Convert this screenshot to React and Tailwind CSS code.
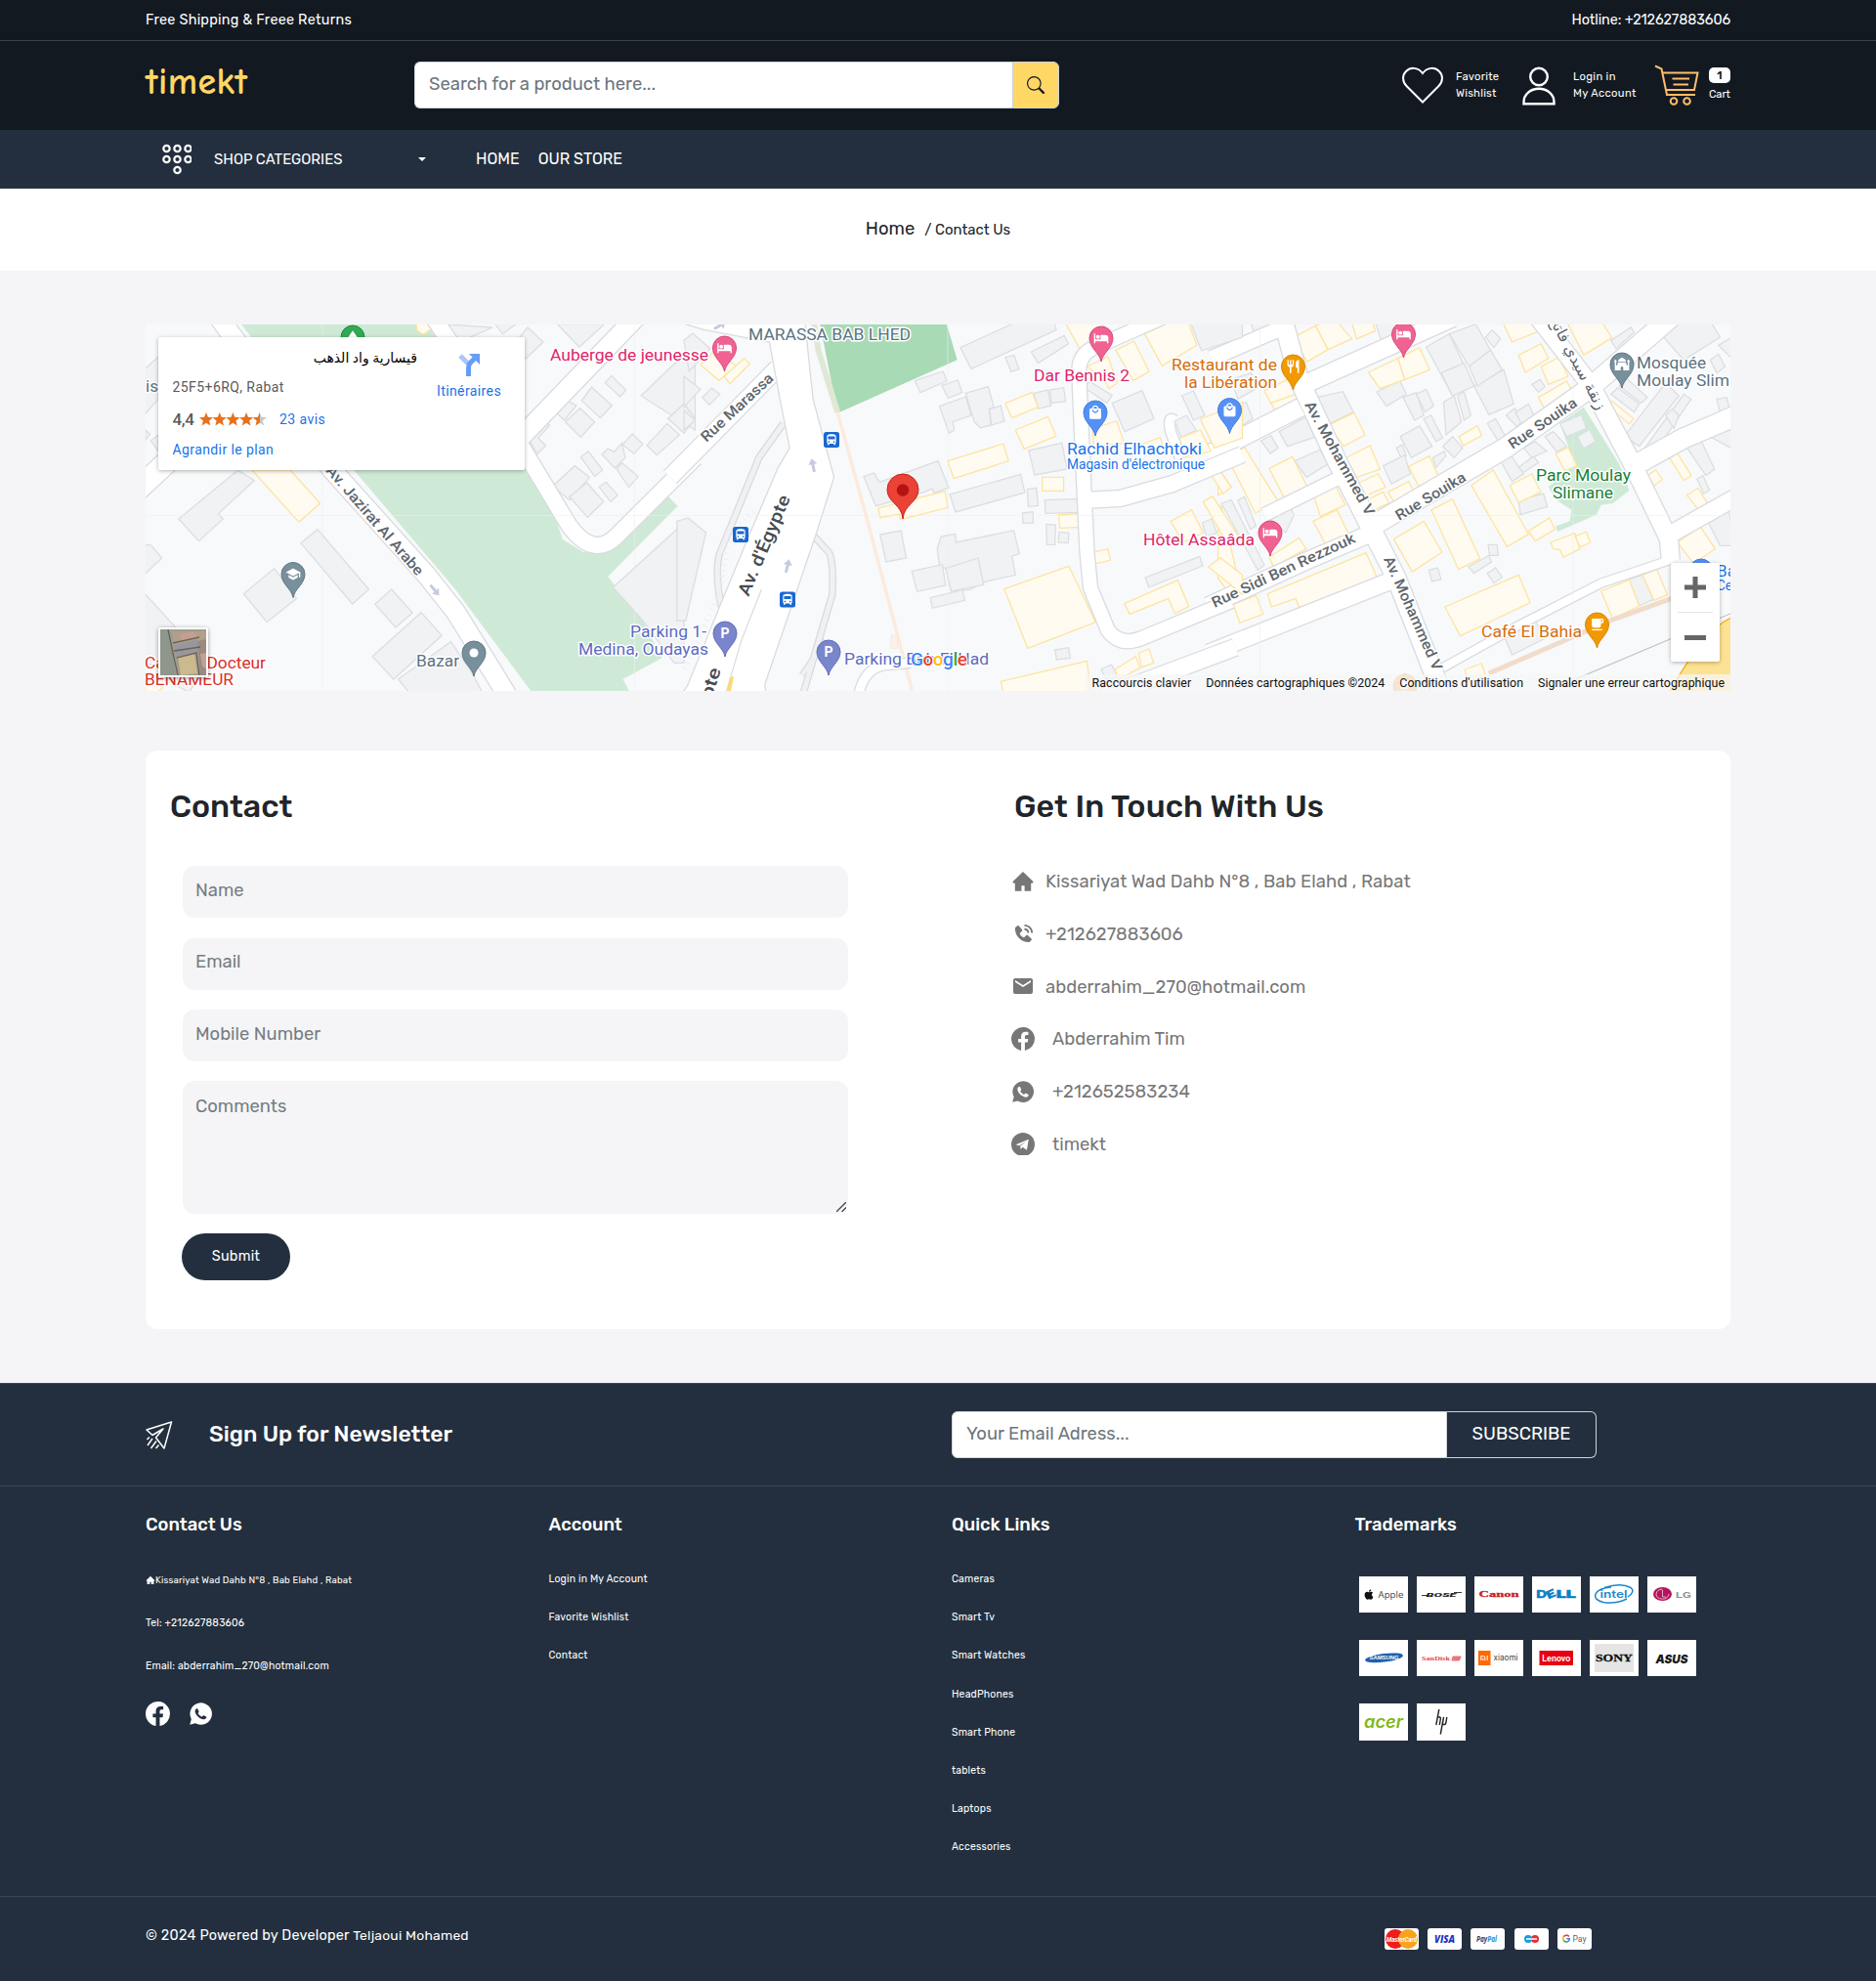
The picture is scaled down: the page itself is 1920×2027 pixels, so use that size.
import React from "react";
import { BsSearch } from "react-icons/bs";
import { BiSolidPhoneCall } from "react-icons/bi";
import {
  MdEmail,
  MdHotel,
  MdLocalMall,
  MdSchool,
  MdRestaurant,
  MdLocalCafe,
  MdDirectionsBus,
  MdMosque,
  MdPark,
} from "react-icons/md";
import { FaApple } from "react-icons/fa";

/* ------------------------------------------------------------------ */
/* Map drawing                                                         */
/* ------------------------------------------------------------------ */

const westGray =
  "120,618 290,468 337,500 233,602 247,618 178,686|470,692 518,650 665,834 618,879|306,848 394,770 458,862 373,935|683,880 730,834 790,906 742,951|675,1040 815,905 874,976 736,1110|749,1110 900,995 960,1090 990,1150 780,1150|0,698 40,698 72,738 25,785|0,820 140,985 70,1070 0,1060|60,1100 130,1030 180,1100 150,1150|0,180 62,120 62,250 20,300|25,345 38,358 25,375|40,378 62,360 62,410|1190,280 1222,248 1260,270 1225,315|1228,320 1270,278 1312,320 1272,367|1275,255 1303,213 1362,270 1328,308|1342,200 1360,178 1402,222 1385,243|1445,240 1600,80 1600,345|1522,310 1568,265 1600,310 1568,355|1462,392 1520,325 1555,360 1490,422|1115,360 1160,308 1183,330 1150,370 1172,392 1148,418|1392,390 1420,357 1450,388 1425,418|1333,420 1350,402 1368,412 1390,385 1400,430 1370,462|1272,428 1294,410 1335,468 1312,487|1375,465 1390,445 1437,488 1410,520|1192,517 1255,455 1298,490 1240,560|1240,550 1290,507 1338,565 1292,613|1325,520 1345,505 1378,545 1358,565|1365,828 1568,630 1568,1060 1540,1060 1450,930|870,20 1020,30 940,68 900,68|1020,10 1100,10 1048,50|1060,110 1120,30 1165,75 1115,125|1205,20 1340,20 1268,90";
const westYellow = "330,468 440,468 525,570 465,628|800,10 838,20 843,35 820,52 803,38|25,1110 75,1135 60,1150 25,1150";

const midGray =
  "792,92 960,10 1060,10 1067,38 823,157|995,105 1090,55 1102,80 1015,140|921,122 946,115 960,158 938,166|662,193 743,165 753,195 677,230|739,208 785,192 797,230 757,247|732,272 808,243 823,300 770,320 775,345 760,355|807,232 872,212 888,275 875,280 880,330 850,338 832,320|875,282 908,270 918,318 882,330|515,488 545,477 560,505 728,440 759,522 716,538 712,525 690,535 550,578|562,666 622,654 637,738 579,750|737,672 777,664 780,690 945,653 961,725 940,732 950,790 860,812 820,835 766,840 750,770 732,760 726,710|653,778 740,758 750,822 668,841|750,770 843,738 859,820 766,840|706,860 798,836 805,868 712,892|762,543 965,481 977,537 778,597|984,527 1010,523 1015,577 987,580|970,600 1000,596 1001,630 972,631|1034,560 1127,556 1129,598 1036,601|1038,634 1065,636 1063,697 1040,697|1075,658 1103,661 1101,692 1073,690|1003,232 1043,222 1052,270 1015,280|1048,222 1088,215 1094,258 1053,262|988,408 1083,385 1098,465 1005,483|1145,213 1163,196 1227,238 1212,262|1227,263 1313,224 1347,310 1263,350|1427,240 1460,225 1493,300 1460,315|1407,318 1440,300 1468,345 1425,368|1063,1020 1102,1013 1107,1045 1068,1050|1322,798 1478,733 1487,762 1332,828|1450,10 1600,10 1600,60 1483,102|1485,630 1512,618 1527,660 1497,672|1195,1080 1225,1065 1245,1105 1210,1110|0,70 25,48 75,95 15,165|53,245 80,216 103,235 73,268|0,180 47,220 0,275|0,285 32,315 0,345|-20,625 12,615 63,660 5,930 -20,930";
const midYellow =
  "557,585 575,580 748,533 756,583 620,620 617,603 562,614|756,440 915,387 930,440 773,494|950,345 1043,304 1066,364 975,403|921,263 998,229 1015,275 940,308|1027,490 1088,490 1088,532 1027,532|1074,606 1135,601 1139,643 1077,646|1161,723 1215,710 1222,745 1166,759|918,833 1103,763 1180,935 985,1015|908,1117 1155,1054 1165,1150 915,1150|1262,878 1415,806 1447,887 1407,908 1388,862 1277,910|1090,10 1190,0 1220,60 1140,107|1155,150 1215,120 1242,200 1218,218 1205,190|1237,100 1290,72 1333,165 1288,193|1320,50 1380,20 1440,0 1470,85 1370,148|1170,340 1240,318 1262,385 1175,395|1480,312 1600,260 1600,370 1520,400|1420,370 1480,345 1510,410 1430,430|1310,390 1365,368 1372,395 1320,405|1500,465 1520,445 1568,520 1545,540|1488,566 1515,548 1600,690 1555,690|1395,625 1455,590 1488,660 1430,690|1503,765 1537,737 1600,790 1600,850|1235,1080 1295,1040 1307,1075 1245,1110|1303,1030 1333,1017 1346,1060 1312,1073|48,145 90,100 150,150 100,193|115,180 173,125 188,142 132,203";

const eastGray =
  "620,90 690,50 765,210 700,240|690,50 770,20 815,100 750,150|665,170 735,140 765,210 700,240|765,210 855,160 885,265 810,298|750,150 815,100 850,160 775,210|470,228 540,193 560,235 500,272|550,245 590,230 613,300 585,315|590,235 620,220 643,270 617,290|673,260 705,240 727,320 680,360|715,240 735,228 755,300 735,315|542,365 600,332 638,395 575,430|530,400 548,390 560,425 545,432|612,310 635,300 670,370 650,380|288,245 368,227 400,290 330,325|175,350 255,305 290,365 200,395|120,378 150,362 172,400 148,417|222,440 300,405 322,450 258,490|490,455 555,422 572,480 515,510|670,395 700,365 730,400 705,430|640,430 675,410 680,425 650,460|805,325 830,310 860,365 840,382|862,300 888,278 915,315 895,335|890,290 930,265 950,310 910,330|800,60 820,38 845,65 825,92|940,205 965,190 980,212 960,228|1180,70 1240,30 1250,45 1195,95|1330,50 1400,10 1480,10 1510,60 1400,130|1220,365 1345,200 1385,240 1265,395|1275,410 1400,235 1422,250 1300,432|1180,235 1200,215 1265,265 1250,290|1205,210 1225,185 1290,245 1270,262|1345,300 1365,280 1385,300 1370,340|1410,400 1450,373 1493,465 1467,485|1440,495 1458,485 1478,530 1460,540|1470,360 1515,330 1560,360 1560,410|1475,630 1535,590 1560,700 1510,700|1505,85 1560,50 1560,140|1480,130 1505,112 1525,150 1500,170|1500,250 1530,245 1541,290 1510,290|845,440 875,420 915,480 880,503|900,460 945,425 960,445 915,475|915,400 950,380 985,410 940,430|980,365 1005,350 1045,395 1015,412|900,560 975,540 987,580 905,605|628,775 655,768 665,803 638,810|748,765 810,730 818,750 765,785|808,697 835,697 838,730 812,730|805,785 830,768 850,797 825,815|1230,805 1275,790 1308,865 1265,885|855,975 950,930 980,985 880,1035|0,570 30,560 130,760 110,775|50,560 70,550 105,640 88,650|150,620 210,585 220,605 195,660|-10,60 50,60 60,85 -10,115|85,10 150,10 150,30 100,45|40,270 75,260 95,310 65,330|468,20 530,10 545,70 490,90|30,190 90,170 110,215 50,250";
const eastYellow =
  "215,62 285,25 323,98 260,135|285,25 340,0 395,65 323,98|393,10 455,10 467,40 410,65|445,168 535,125 555,190 480,218|535,125 600,92 630,160 555,190|150,260 230,218 245,258 168,298|130,225 210,185 240,230 150,262|325,330 402,292 435,360 370,395|17,428 70,398 172,565 103,600|-10,460 30,520 -10,545|145,463 215,427 260,520 190,553|375,432 450,393 480,465 410,490|277,540 340,505 375,575 300,610|278,625 350,590 388,670 318,700|410,510 475,480 497,520 430,550|505,535 567,503 590,550 530,580|567,457 630,425 658,490 597,518|440,560 490,535 507,570 450,595|140,848 438,722 472,800 240,902 225,862 152,888|145,735 235,676 257,710 158,765|36,880 105,853 127,910 56,937|-10,575 0,580 55,820 20,840 -10,800|522,680 613,625 668,720 578,780|636,590 700,557 783,740 718,773|757,515 823,468 930,665 865,703|873,515 940,480 967,535 900,568|720,365 775,332 788,362 732,393|900,115 968,80 990,125 920,168|968,150 1022,122 1050,180 990,205|960,245 1045,195 1068,235 980,282|850,10 970,10 978,35 880,75|1045,10 1150,10 1182,62 1097,115|1168,270 1183,257 1248,310 1235,326|930,655 993,615 1010,650 950,686|997,690 1070,662 1085,710 1035,735 1025,712 1005,710|1072,670 1105,658 1117,690 1085,705|1357,430 1380,415 1423,485 1400,500|1290,485 1315,468 1335,497 1310,515|1410,545 1443,523 1475,575 1448,595|1530,570 1560,560 1560,600|1380,690 1450,642 1495,710 1430,755|677,888 900,790 935,875 723,977|1150,840 1235,805 1265,885 1185,925|1275,790 1318,773 1350,850 1310,868|738,1080 788,1062 800,1100 745,1120";

function Shapes({ data, fill, stroke }) {
  return data
    .split("|")
    .map((p, i) => (
      <polygon key={i} points={p} fill={fill} stroke={stroke} strokeWidth="1.3" vectorEffect="non-scaling-stroke" />
    ));
}

function Roads({ roads, fill = "#ffffff" }) {
  return (
    <>
      {roads.map(([d, w], i) => (
        <path key={"c" + i} d={d} fill="none" stroke="#d9dbe0" strokeWidth={w + 2.6} strokeLinejoin="round" vectorEffect="non-scaling-stroke" />
      ))}
      {roads.map(([d, w], i) => (
        <path key={"f" + i} d={d} fill="none" stroke={fill} strokeWidth={w} strokeLinejoin="round" vectorEffect="non-scaling-stroke" />
      ))}
    </>
  );
}

function Label({ x, y, w, size = 17, fill, rotate = 0, weight = 400, children }) {
  return (
    <text
      transform={`translate(${x} ${y}) rotate(${rotate})`}
      textLength={w}
      lengthAdjust="spacingAndGlyphs"
      fontSize={size}
      fontWeight={weight}
      fill={fill}
      stroke="#ffffff"
      strokeWidth="3"
      strokeLinejoin="round"
      paintOrder="stroke"
    >
      {children}
    </text>
  );
}

function Pin({ x, y, fill, edge, icon: Icon, letter }) {
  return (
    <g transform={`translate(${x} ${y})`}>
      <path d="M0 0C-1.5-9-12-14-12-24A12 12 0 1 1 12-24C12-14 1.5-9 0 0Z" fill={fill} stroke={edge} strokeWidth="1" />
      {Icon && <Icon x={-8} y={-32} width={16} height={16} size={16} color="#fff" />}
      {letter && (
        <text x="0" y="-19" textAnchor="middle" fontSize="14" fontWeight="700" fill="#fff">
          {letter}
        </text>
      )}
      {!Icon && !letter && <circle cx="0" cy="-24" r="4.5" fill="#fff" />}
    </g>
  );
}

function Arrow({ x, y, r }) {
  return <path d="M-1.5 7V-1H-4.5L0-7L4.5-1H1.5V7Z" fill="#c5cae0" transform={`translate(${x} ${y}) rotate(${r})`} />;
}

const PINK = "#e0246b";
const SLATE = "#5a7382";
const STREET = "#60666d";

function MapDrawing() {
  const gray = { fill: "#f1f2f4", stroke: "#dcdee2" };
  const yellow = { fill: "#fffbf0", stroke: "#fde49f" };
  return (
    <svg viewBox="0 0 1622 375" className="block h-full w-full font-['Roboto',sans-serif]">
      <rect width="1622" height="375" fill="#f8f9fb" />
      {/* west */}
      <g transform="translate(-9 -7) scale(.35714 .33333)">
        <polygon
          points="292,10 830,10 1112,380 1150,450 1220,680 1280,720 1345,715 1515,540 1550,578 1350,795 1450,930 1505,1045 1393,1110 1413,1150 1132,1150 910,830 622,468"
          fill="#ceead6"
        />
        <Shapes data={westGray} {...gray} />
        <Shapes data={westYellow} {...yellow} />
        <Roads
          roads={[
            ["M235 0L560 468L830 790L915 905L1062 1160", 19],
            ["M0 530L150 380", 22],
            ["M850 0L1105 400L1240 640Q1310 740 1375 670L1600 430", 16],
            ["M1080 390L1430 0", 19],
          ]}
        />
      </g>
      {/* east */}
      <g transform="translate(1101 -7) scale(.33806 .33333)">
        <polygon
          points="1097,275 1025,325 1070,450 1040,480 990,520 1015,560 1060,590 1055,625 1012,640 1018,657 1135,605 1150,575 1185,570 1235,530 1205,450"
          fill="#ceead6"
        />
        <path d="M1550 918Q1500 940 1475 980L1410 1060L1385 1100L1350 1160H1560Z" fill="#fde293" stroke="#f9ab00" strokeWidth="1.2" vectorEffect="non-scaling-stroke" />
        <Shapes data={eastGray} {...gray} />
        <Shapes data={eastYellow} {...yellow} />
        <Shapes data="1025,325 1090,298 1105,340 1045,365|1077,365 1115,343 1133,380 1097,402" {...gray} />
        <Shapes data="1012,418 1050,398 1077,455 1040,470" {...yellow} />
        <path d="M810 1092L1190 925L1370 860" fill="none" stroke="#f1dccb" strokeWidth="5" vectorEffect="non-scaling-stroke" />
        <path d="M1060 1115L1550 905" fill="none" stroke="#c4c6ca" strokeWidth="1.2" vectorEffect="non-scaling-stroke" />
        <Roads
          roads={[
            ["M-30 125L210 20", 15],
            ["M-40 420L240 275", 18],
            ["M230 215L700 0", 18],
            ["M185 0L235 190L345 430L450 640L530 800L670 1160", 19],
            ["M430 655L860 400L1110 220L1360 0", 20],
            ["M-40 885L250 750L470 655", 17],
            ["M130 605L360 490", 13],
            ["M-40 1030L520 805", 17],
            ["M960 0L1120 210L1240 440L1355 680L1360 745", 18],
            ["M1240 460L1400 370L1560 300", 20],
            ["M1350 670L1560 550", 17],
            ["M670 1075L900 945L1150 815L1370 740", 8],
          ]}
        />
      </g>
      {/* centre */}
      <g transform="translate(551 -7) scale(.35714 .33333)">
        <polygon points="388,10 750,10 783,130 440,293" fill="#a8dab5" />
        <path d="M372 10L385 100L440 290" fill="none" stroke="#dfe8d5" strokeWidth="6" vectorEffect="non-scaling-stroke" />
        <path d="M440 290L520 600L655 1150" fill="none" stroke="#fcebdd" strokeWidth="3.5" vectorEffect="non-scaling-stroke" />
        <rect x="594" y="975" width="18" height="40" fill="#fdf2e8" stroke="#fbe6d4" vectorEffect="non-scaling-stroke" />
        <Shapes data={midGray} {...gray} />
        <Shapes data={midYellow} {...yellow} />
        <Roads
          fill="#f0f1f3"
          roads={[
            ["M285 325L215 430L100 730Q88 800 110 900", 5],
            ["M372 670L415 720Q430 750 425 850L340 1160", 5],
            ["M407 990L338 1098", 4],
          ]}
        />
        <path d="M200 595L130 660L100 850L0 1080" fill="none" stroke="#eceef1" strokeWidth="6" strokeDasharray="1 5" vectorEffect="non-scaling-stroke" />
        <Roads
          roads={[
            ["M-40 490L268 155", 17],
            ["M1370 0L1180 90Q1130 110 1132 170L1148 560L1155 720L1165 830L1215 960Q1250 1010 1310 985L1568 870", 14],
            ["M1155 560L1250 555L1400 510L1600 420", 16],
            ["M1422 430L1395 350Q1385 300 1405 315", 10],
            ["M1200 1165L1580 1012", 17],
            ["M500 1160Q515 1080 570 1068L650 1060", 9],
          ]}
        />
        <polygon
          points="-60,0 345,0 370,250 430,490 380,660 232,1125 235,1160 -10,1160 10,1130 105,880 190,660 270,460 303,400 275,250 245,75 60,38"
          fill="#fff"
          stroke="#d9dbe0"
          strokeWidth="1.3"
          vectorEffect="non-scaling-stroke"
        />
        <path d="M222 835L165 990L118 1160" fill="none" stroke="#d9dbe0" strokeWidth="1.2" vectorEffect="non-scaling-stroke" />
        <polygon points="132,1105 143,1100 134,1150 122,1150" fill="#fcd975" />
      </g>
      <path d="M0 195.500H1622M181 0V375M500.500 0V375M821 0V375M1140.500 0V375M1461 0V375" stroke="#eceef0" strokeOpacity=".6" fill="none" />
      <Arrow x={683} y={144} r={-12} />
      <Arrow x={657} y={247} r={14} />
      <Arrow x={296} y={272} r={140} />
      <Arrow x={588} y={1} r={60} />

      {/* streets */}
      <Label x={574} y={121} w={95} size={15} rotate={-43} fill={STREET} weight={500}>Rue Marassa</Label>
      <Label x={184} y={150} w={143} size={15} rotate={49} fill={STREET} weight={500}>Av. Jazirat Al Arabe</Label>
      <Label x={617} y={279} w={110} size={18} rotate={-67} fill="#474b50" weight={500}>Av. d'Égypte</Label>
      <Label x={568} y={418} w={68} size={18} rotate={-72} fill="#474b50" weight={500}>Égypte</Label>
      <Label x={1186} y={82} w={131} size={15} rotate={61} fill={STREET} weight={500}>Av. Mohammed V</Label>
      <Label x={1267} y={240} w={126} size={15} rotate={66} fill={STREET} weight={500}>Av. Mohammed V</Label>
      <Label x={1283} y={201} w={81} size={15} rotate={-31} fill={STREET} weight={500}>Rue Souika</Label>
      <Label x={1399} y={128} w={81} size={15} rotate={-34} fill={STREET} weight={500}>Rue Souika</Label>
      <Label x={1094} y={290} w={160} size={15} rotate={-25} fill={STREET} weight={500}>Rue Sidi Ben Rezzouk</Label>
      <text transform="translate(1461 42) rotate(62)" textAnchor="middle" direction="rtl" fontSize="16" fill={STREET} stroke="#fff" strokeWidth="3" paintOrder="stroke" className="font-['DejaVu_Sans']">
        زنقة سيدي فاتح
      </text>

      {/* places */}
      <Label x={414} y={37} w={162} fill={PINK}>Auberge de jeunesse</Label>
      <Label x={617} y={16} w={166} fill={SLATE}>MARASSA BAB LHED</Label>
      <Label x={909} y={57.500} w={98} fill={PINK}>Dar Bennis 2</Label>
      <Label x={943} y={133} w={138} fill="#1a73e8">Rachid Elhachtoki</Label>
      <Label x={943} y={147.500} w={141} size={14} fill="#1a73e8">Magasin d'électronique</Label>
      <Label x={1050} y={47} w={108} fill="#d56e0c">Restaurant de</Label>
      <Label x={1063} y={64.500} w={95} fill="#d56e0c">la Libération</Label>
      <Label x={1526} y={45} w={71} fill={SLATE}>Mosquée</Label>
      <Label x={1526} y={63} w={95} fill={SLATE}>Moulay Slim</Label>
      <Label x={1423} y={160} w={97} fill="#188038">Parc Moulay</Label>
      <Label x={1440} y={177.500} w={62} fill="#188038">Slimane</Label>
      <Label x={1021} y={225.500} w={114} fill={PINK}>Hôtel Assaâda</Label>
      <Label x={1367} y={319.500} w={103} fill="#d56e0c">Café El Bahia</Label>
      <Label x={277} y={349.500} w={44} fill={SLATE}>Bazar</Label>
      <Label x={496} y={320} w={78} fill="#5c6bc0">Parking 1-</Label>
      <Label x={443} y={338} w={133} fill="#5c6bc0">Medina, Oudayas</Label>
      <Label x={715} y={348} w={148} fill="#5c6bc0">Parking Bab El Had</Label>
      <Label x={-1} y={352} w={124} fill="#d93025">Cabinet Docteur</Label>
      <Label x={-1} y={369} w={91} fill="#d93025">BENAMEUR</Label>
      <Label x={0} y={69} w={13} fill={SLATE}>is</Label>
      <Label x={1608} y={258} w={20} fill="#1a73e8">Ba</Label>
      <Label x={1608} y={272} w={16} size={14} fill="#1a73e8">Ce</Label>

      <Pin x={336} y={360} fill="#78909c" edge="#5f7682" />
      <Pin x={151} y={279.500} fill="#78909c" edge="#5f7682" icon={MdSchool} />
      <Pin x={592.500} y={48} fill="#f06292" edge="#d9487b" icon={MdHotel} />
      <Pin x={978} y={38} fill="#f06292" edge="#d9487b" icon={MdHotel} />
      <Pin x={1287.500} y={34} fill="#f06292" edge="#d9487b" icon={MdHotel} />
      <Pin x={1151} y={237} fill="#f06292" edge="#d9487b" icon={MdHotel} />
      <Pin x={1174.500} y={67} fill="#f29900" edge="#d88700" icon={MdRestaurant} />
      <Pin x={1485.500} y={331} fill="#f29900" edge="#d88700" icon={MdLocalCafe} />
      <Pin x={1289} y={394} fill="#f7b85c" edge="#f0a845" icon={MdLocalCafe} />
      <Pin x={972} y={114} fill="#5491f5" edge="#3f7be0" icon={MdLocalMall} />
      <Pin x={1109.500} y={111.500} fill="#5491f5" edge="#3f7be0" icon={MdLocalMall} />
      <Pin x={1592} y={276} fill="#5491f5" edge="#3f7be0" />
      <Pin x={1511} y={65} fill="#78909c" edge="#5f7682" icon={MdMosque} />
      <Pin x={593} y={340} fill="#7986cb" edge="#5f6dba" letter="P" />
      <Pin x={699} y={359} fill="#7986cb" edge="#5f6dba" letter="P" />
      <Pin x={212} y={37} fill="#34a853" edge="#1e8e3e" icon={MdPark} />
      {[
        [702, 118],
        [609, 215],
        [657, 281.500],
      ].map(([x, y]) => (
        <g key={x}>
          <rect x={x - 8} y={y - 8} width="16" height="16" rx="2.500" fill="#1967d2" />
          <MdDirectionsBus x={x - 7} y={y - 7} size={14} color="#fff" />
        </g>
      ))}
      <path d="M775 199C774 184 759 182 759 169A16 16 0 0 1 791 169C791 182 776 184 775 199Z" fill="#ea4335" stroke="#c5221f" />
      <circle cx="775" cy="169.500" r="6.200" fill="#b31412" />
      <text x="783" y="349" textLength="58" fontSize="19" fontWeight="500" stroke="#fff" strokeWidth="2" paintOrder="stroke">
        <tspan fill="#4285f4">G</tspan>
        <tspan fill="#ea4335">o</tspan>
        <tspan fill="#fbbc05">o</tspan>
        <tspan fill="#4285f4">g</tspan>
        <tspan fill="#34a853">l</tspan>
        <tspan fill="#ea4335">e</tspan>
      </text>
    </svg>
  );
}

const STAR = "M7 0L8.900 4.800L14 5.200L10.100 8.500L11.300 13.500L7 10.800L2.700 13.500L3.900 8.500L0 5.200L5.100 4.800Z";

function MapSection() {
  return (
    <div className="relative mt-[55px] h-[375px] w-full overflow-hidden">
      <MapDrawing />
      <div className="absolute left-[13px] top-[13px] flex h-[136px] w-[375px] rounded-[2px] bg-white font-['Roboto',sans-serif] shadow-[0_1px_4px_rgba(0,0,0,0.3)]">
        <div className="flex w-[265px] flex-col pl-[14.500px] pt-[10px] text-[14px] leading-[20px] text-[#1a73e8]">
          <div dir="rtl" className="h-[24px] text-[14px] leading-[24px] tracking-normal text-black font-['Liberation_Serif','DejaVu_Sans']">قيسارية واد الذهب</div>
          <div className="mt-[7px] tracking-[0.420px] text-[#5b5b5b]">25F5+6RQ, Rabat</div>
          <div className="mt-[12px] flex items-center">
            <span className="w-[27px] text-[17px] font-medium tracking-[-0.3px] text-[#5b5b5b]">4,4</span>
            <svg width="70" height="14" viewBox="0 0 70 14">
              <defs>
                <linearGradient id="half">
                  <stop offset=".5" stopColor="#e7711b" />
                  <stop offset=".5" stopColor="#c9c9c9" />
                </linearGradient>
              </defs>
              {[0, 1, 2, 3, 4].map((i) => (
                <path key={i} d={STAR} transform={`translate(${i * 13.700} 0)`} fill={i === 4 ? "url(#half)" : "#e7711b"} />
              ))}
            </svg>
            <span className="ml-[12.500px] mt-px tracking-[0.450px]">23 avis</span>
          </div>
          <div className="mt-[11px] tracking-[0.400px]">Agrandir le plan</div>
        </div>
        <div className="flex flex-1 flex-col items-center pr-[4px] pt-[16px]">
          <svg width="22" height="24" viewBox="0 0 22 24" fill="none">
            <path d="M2 3L10 11" stroke="#a8c7fa" strokeWidth="5" />
            <path d="M10.500 24V15Q10.500 12 13 9.500L17 5.500" stroke="#669df6" strokeWidth="5" />
            <path d="M11 1H22V12Z" fill="#669df6" />
          </svg>
          <span className="mt-[5px] text-[14px] leading-[20px] tracking-[0.400px] text-[#1a73e8]">Itinéraires</span>
        </div>
      </div>
      <div className="absolute left-[13px] top-[310px] h-[51px] w-[51px] overflow-hidden rounded-[2px] border-2 border-white shadow-[0_1px_4px_rgba(0,0,0,0.4)]">
        <svg width="47" height="47" viewBox="0 0 47 47">
          <rect width="47" height="47" fill="#a09c8e" />
          <path d="M0 0H9L16 47H0Z" fill="#8f968c" />
          <path d="M12 2H47V12L14 16Z" fill="#b0a08a" />
          <path d="M20 5L34 2L38 9L22 12Z" fill="#c49f94" />
          <path d="M14 16L38 10L41 24L17 28Z" fill="#98989c" />
          <path d="M18 28L35 25L38 45L21 47Z" fill="#cdb98e" />
          <path d="M38 12L47 10V47H41Z" fill="#9b8a80" />
          <path d="M41 25L47 24V40L43 38Z" fill="#c49f94" />
          <path d="M8 0L13 24L18 47M13 14L40 8M14 22L41 18M17 29L37 24L40 47" stroke="#4e4c42" strokeWidth="1.300" fill="none" opacity=".7" />
        </svg>
      </div>
      <div className="absolute left-[1561px] top-[244px] flex h-[101px] w-[50px] flex-col items-center justify-between rounded-[2px] bg-white shadow-[0_1px_4px_rgba(0,0,0,0.3)]">
        <svg width="24" height="101" viewBox="0 0 24 101" className="overflow-visible">
          <path d="M1 25H23M12 14V36M1 76.500H23" stroke="#666" strokeWidth="5" />
          <path d="M-6 50.500H30" stroke="#e6e6e6" />
        </svg>
      </div>
      <div className="absolute bottom-0 right-0 flex h-[17px] items-center gap-[15px] bg-[#f5f5f5]/75 pl-[7px] pr-[6px] pt-px text-[12.400px] leading-none text-[#111] font-['Roboto',sans-serif]">
        <span className="tracking-[0.08px]">Raccourcis clavier</span>
        <span className="tracking-[0.030px]">Données cartographiques ©2024</span>
        <span className="tracking-[0.05px]">Conditions d'utilisation</span>
        <span className="tracking-[0.02px]">Signaler une erreur cartographique</span>
      </div>
    </div>
  );
}

/* ------------------------------------------------------------------ */
/* Header                                                              */
/* ------------------------------------------------------------------ */

function HeartIcon() {
  return (
    <svg width="42" height="38" viewBox="0 0 42 38" fill="none" stroke="#fff" strokeWidth="2">
      <path d="M21 36.500L4.500 20C0 15.500 0 9 4 5C8.500 .500 16 .500 21 7C26 .500 33.500 .500 38 5C42 9 42 15.500 37.500 20Z" />
    </svg>
  );
}

function PersonIcon() {
  return (
    <svg width="34" height="40" viewBox="0 0 34 40" fill="none" stroke="#fff" strokeWidth="2.400">
      <circle cx="17" cy="10.500" r="8.800" />
      <path d="M1.500 38.200V36.500C1.500 28.500 8.500 22.800 17 22.800S32.500 28.500 32.500 36.500V38.200Z" />
    </svg>
  );
}

function CartIcon() {
  return (
    <svg width="46" height="42" viewBox="0 0 46 42" fill="none" stroke="#febd69" strokeWidth="2">
      <path d="M1 1.500L7.500 4.500L13 31H42" />
      <path d="M8.800 8.500H44.500L41 26H12.300M18.500 14.500H36M19.500 20.500H35" />
      <circle cx="20" cy="37.500" r="3.300" />
      <circle cx="33.500" cy="37.500" r="3.300" />
    </svg>
  );
}

function Header() {
  return (
    <header className="text-white">
      <div className="h-[42px] border-b border-[#3b4149] bg-[#131921]">
        <div className="mx-auto flex h-[41px] w-[1622px] items-center justify-between text-[14.400px]">
          <span className="tracking-[0.250px]">Free Shipping &amp; Freee Returns</span>
          <span className="tracking-[-0.100px]">Hotline: +212627883606</span>
        </div>
      </div>
      <div className="h-[91px] bg-[#131921]">
        <div className="mx-auto flex h-[91px] w-[1622px]">
          <div className="w-[275px] pt-[17px] text-[38px] font-bold leading-[50px] tracking-[0.500px] text-[#fed764] font-['Comic_Sans_MS','Comic_Neue',cursive]">timekt</div>
          <div className="mt-[21px] flex h-[48px] w-[660px]">
            <div className="flex flex-1 items-center rounded-l-[6px] border border-r-0 border-[#ced4da] bg-white pb-px pl-[14px] text-[18.400px] text-[#6c757d]">Search for a product here...</div>
            <div className="flex w-[48px] items-center justify-center rounded-r-[6px] border border-[#ced4da] bg-[#fed764] text-[#131921]">
              <BsSearch size={18} />
            </div>
          </div>
          <div className="ml-auto flex text-[11.200px] leading-[17px] tracking-[0.250px]">
            <div className="mt-[26px]"><HeartIcon /></div>
            <div className="ml-[13px] mt-[28px] w-[68px]">Favorite<br />Wishlist</div>
            <div className="mt-[26px]"><PersonIcon /></div>
            <div className="ml-[18px] mt-[28px] w-[83px] tracking-[0.350px]">Login in<br />My Account</div>
            <div className="mt-[24px]"><CartIcon /></div>
            <div className="ml-[10px] mt-[27px] w-[22px]">
              <div className="flex h-[16px] w-[22px] items-center justify-center rounded-[5px] bg-white text-[11px] font-semibold text-[#131921]">1</div>
              <div className="mt-[3px] tracking-[-0.100px]">Cart</div>
            </div>
          </div>
        </div>
      </div>
      <nav className="h-[60px] bg-[#232f3e]">
        <div className="mx-auto flex h-[60px] w-[1622px] items-center">
          <svg width="30" height="34" viewBox="0 0 30 34" fill="none" stroke="#fff" strokeWidth="2.200" className="ml-[17px]">
            {[[5, 6], [16, 6], [27, 6], [5, 17], [16, 17], [27, 17], [16, 28]].map(([x, y]) => (
              <circle key={x + "-" + y} cx={x - 0.500} cy={y} r="3.200" />
            ))}
          </svg>
          <span className="ml-[23px] w-[209px] text-[14.900px]">SHOP CATEGORIES</span>
          <span className="h-0 w-0 border-x-[4px] border-t-[4px] border-x-transparent border-t-white" />
          <span className="ml-[51px] text-[16px]">HOME</span>
          <span className="ml-[19px] text-[16px]">OUR STORE</span>
        </div>
      </nav>
    </header>
  );
}

/* ------------------------------------------------------------------ */
/* Contact card                                                        */
/* ------------------------------------------------------------------ */

function HomeIcon({ size }) {
  return (
    <svg width={size} height={size} viewBox="0 0 24 24" fill="currentColor">
      <path d="M12 2L22.700 12.300L21.600 13.800H20.200V21.800H13.600V16.200H10.400V21.800H3.800V13.800H2.400L1.300 12.300Z" />
    </svg>
  );
}

function FacebookIcon({ size }) {
  return (
    <svg width={size} height={size} viewBox="0 0 24 24" fill="currentColor">
      <path d="M24 12a12 12 0 1 0-13.900 11.900v-8.400H7.100V12h3V9.400c0-3 1.800-4.700 4.600-4.700 1.300 0 2.700.2 2.700.2v3h-1.500c-1.500 0-2 .9-2 1.900V12h3.400l-.5 3.500h-2.900v8.400A12 12 0 0 0 24 12Z" />
    </svg>
  );
}

function WhatsappSolid({ size }) {
  return (
    <svg width={size} height={size} viewBox="0 0 24 24" fill="currentColor">
      <path fillRule="evenodd" d="M2 22l1.400-5.100A10 10 0 1 1 7.100 20.700ZM8.400 7.300c-.2 0-.5.100-.8.400-.9 1-1.100 2.200-.5 3.600 1 2.500 3.300 4.700 5.900 5.600 1.600.6 3 .3 3.900-.8.4-.5.4-1.100.3-1.300l-2.500-1.300c-.3-.1-.5 0-.7.200l-.9 1.100c-1.600-.6-2.900-1.700-3.700-3.200l.8-1c.1-.2.1-.4 0-.6l-.9-2.300c-.2-.4-.5-.4-.9-.4Z" />
    </svg>
  );
}

function TelegramIcon() {
  return (
    <svg width="24" height="24" viewBox="0 0 24 24" className="mt-px">
      <clipPath id="tg"><rect width="24" height="23" /></clipPath>
      <g clipPath="url(#tg)">
        <circle cx="12" cy="12" r="12" fill="#777" />
        <path d="M4.500 12.200L17.800 6.800L15.900 17.800L11.600 14.700L9.600 17L9.200 13.600L15.500 8.800L8 13.200Z" fill="#fff" />
      </g>
    </svg>
  );
}

const details = [
  [<HomeIcon size={24} />, "Kissariyat Wad Dahb N°8 , Bab Elahd , Rabat", "w-[36px]", "tracking-[0.05px]"],
  [<BiSolidPhoneCall size={23} />, "+212627883606", "w-[36px]", "tracking-[0.050px]"],
  [<MdEmail size={24} />, "abderrahim_270@hotmail.com", "w-[36px]", "tracking-[0.05px]"],
  [<FacebookIcon size={24} />, "Abderrahim Tim", "w-[43px]", "tracking-normal"],
  [<WhatsappSolid size={26} />, "+212652583234", "w-[43px]", "tracking-[0.050px]"],
  [<TelegramIcon />, "timekt", "w-[43px]", "tracking-normal"],
];

function ContactCard() {
  const field = "flex h-[53px] w-[681px] items-center rounded-[12px] bg-[#f5f5f7] px-[13px] pb-[2px] mb-[20.500px]";
  return (
    <div className="mt-[61px] flex h-[592px] rounded-[12px] bg-white text-[18.400px]">
      <div className="w-[889px] pl-[25px] pt-[37px]">
        <h2 className="text-[32.200px] font-medium leading-[40px] text-[#212529]">Contact</h2>
        <div className="ml-[13px] mt-[41px] text-[#767d83]">
          <div className={field}>Name</div>
          <div className={field}>Email</div>
          <div className={field}>Mobile Number</div>
          <div className="relative -mt-px h-[136px] w-[681px] rounded-[12px] bg-[#f5f5f7] px-[13px] pt-[15px] leading-[23px]">
            Comments
            <svg width="10" height="10" viewBox="0 0 10 10" className="absolute bottom-[2px] right-[2px]">
              <path d="M0 10L10 0M5.500 10L10 5.500" stroke="#444" strokeWidth="1.300" />
            </svg>
          </div>
        </div>
        <div className="ml-[12px] mt-[20px] flex h-[48px] w-[111px] items-center justify-center rounded-full bg-[#232f3e] text-[14.400px] tracking-[0.200px] text-white">Submit</div>
      </div>
      <div className="pt-[37px]">
        <h2 className="text-[32px] font-medium leading-[40px] tracking-[0.15px] text-[#212529]">Get In Touch With Us</h2>
        <ul className="-ml-[4px] mt-[30px]">
          {details.map(([icon, text, gap, track]) => (
            <li key={text} className="flex h-[53.800px] items-center text-[#777]">
              <span className={gap + " flex"}>
                <span className="flex w-[26px] justify-center">{icon}</span>
              </span>
              <span className={track + " pt-[2px]"}>{text}</span>
            </li>
          ))}
        </ul>
      </div>
    </div>
  );
}

/* ------------------------------------------------------------------ */
/* Footer                                                              */
/* ------------------------------------------------------------------ */

function Tile({ children, tall }) {
  return (
    <svg width="50" height={tall ? 38 : 37} viewBox={tall ? "0 0 50 38" : "0 0 50 37"} className="bg-white" textAnchor="middle">
      {children}
    </svg>
  );
}

function Word({ x = 25, y, w, children, ...rest }) {
  return (
    <text x={x} y={y} textLength={w} lengthAdjust="spacingAndGlyphs" {...rest}>
      {children}
    </text>
  );
}

function Trademarks() {
  return (
    <div className="ml-[4px] grid w-[346px] grid-cols-[repeat(6,50px)] gap-x-[9.200px] gap-y-[28px]">
      <Tile>
        <FaApple x={4} y={12.500} size={12} color="#111" />
        <Word x={32.500} y={22} w={26} fontSize="9" fill="#444" className="font-['Open_Sans']">Apple</Word>
      </Tile>
      <Tile>
        <Word y={20.500} w={31} fontSize="6.200" fontWeight="900" fontStyle="italic" fill="#222" className="font-['Roboto']">BOSE</Word>
        <path d="M5 19.500H12M38 16.500H46" stroke="#222" strokeWidth=".9" />
      </Tile>
      <Tile>
        <Word y={21} w={41} fontSize="9" fontWeight="700" fill="#c8202c" stroke="#c8202c" strokeWidth=".3" className="font-['Liberation_Serif']">Canon</Word>
      </Tile>
      <Tile>
        <g fill="#0b7fc4" stroke="#0b7fc4" strokeWidth=".7" fontSize="10.500" fontWeight="900" className="font-['Lato']">
          <Word x={9.500} y={21.700} w={10.500}>D</Word>
          <Word x={19} y={21.700} w={9} transform="rotate(-24 19 18)">E</Word>
          <Word x={34.500} y={21.700} w={20}>LL</Word>
        </g>
      </Tile>
      <Tile>
        <path d="M22 11Q9 12 6 18Q4 24 14 26.500Q27 28.500 38 23M15 11.500Q32 6 42 11.500Q47 15.500 39 21" fill="none" stroke="#1e88cc" strokeWidth="1.500" />
        <Word x={24.500} y={22} w={28} fontSize="11" fontWeight="600" fill="#1e88cc" className="font-['Inter']">intel</Word>
      </Tile>
      <Tile>
        <ellipse cx="15.500" cy="18" rx="9.500" ry="7" fill="#b5145b" />
        <path d="M15.500 14V21H19M22 18Q21 23 15.500 23.200Q9 22.500 9 18Q9.500 13.500 15.500 13" fill="none" stroke="#fff" strokeWidth=".8" opacity=".8" />
        <Word x={37} y={21.500} w={16} fontSize="9.500" fontWeight="700" fill="#8c8c8c" className="font-['Liberation_Sans']">LG</Word>
      </Tile>
      <Tile>
        <ellipse cx="25.500" cy="18.300" rx="19.500" ry="4.300" fill="#1f5fae" transform="rotate(-7 25.500 18.300)" />
        <Word x={25.500} y={20.400} w={30} fontSize="5.500" fontWeight="700" fill="#fff" className="font-['Liberation_Sans']">SAMSUNG</Word>
      </Tile>
      <Tile>
        <Word x={19.500} y={21} w={29} fontSize="7" fontWeight="700" fill="#e84353" className="font-['Liberation_Serif']">SanDisk</Word>
        <path d="M37 17H45L43.500 21H36ZM38.500 19H43" fill="#f28a94" stroke="#e84353" strokeWidth=".7" />
      </Tile>
      <Tile>
        <rect x="4" y="11" width="12.500" height="15" fill="#ff6900" />
        <path d="M6.800 21V16.500H9.500Q10.800 16.500 10.800 18V21M8.800 18.500V21M13.200 16V21" fill="none" stroke="#fff" strokeWidth="1" />
        <Word x={32} y={21} w={25} fontSize="8.500" fill="#444" className="font-['Inter']">xiaomi</Word>
      </Tile>
      <Tile>
        <rect x="7.500" y="11" width="34.500" height="15" fill="#e60012" />
        <Word x={24.800} y={21.700} w={29} fontSize="9.500" fontWeight="600" fill="#fff" className="font-['Roboto']">Lenovo</Word>
      </Tile>
      <Tile>
        <rect x="5" y="4" width="40" height="29" fill="#e5e5e5" />
        <Word y={22} w={38} fontSize="10.500" fontWeight="700" fill="#111" stroke="#111" strokeWidth=".3" className="font-['Liberation_Serif']">SONY</Word>
      </Tile>
      <Tile>
        <Word y={23.500} w={33} fontSize="12" fontWeight="900" fontStyle="italic" fill="#1a1a1a" className="font-['Inter']">ASUS</Word>
      </Tile>
      <Tile tall>
        <Word y={24.500} w={40} fontSize="18" fontWeight="600" fontStyle="italic" fill="#83b81a" className="font-['Inter']">acer</Word>
      </Tile>
      <Tile tall>
        <path d="M22.800 6L19.800 22M21.500 14H23.500Q24.500 14 24.300 16L23.300 22M27.500 14L24.300 31.500M27.500 14L26.300 21.500H28.500Q29.500 21.500 29.800 20L30.800 14" fill="none" stroke="#222" strokeWidth="1.400" />
      </Tile>
    </div>
  );
}

function Card({ children }) {
  return (
    <svg width="35" height="22" viewBox="0 0 35 22" className="rounded-[3px] bg-white" textAnchor="middle">
      {children}
    </svg>
  );
}

function Payments() {
  return (
    <div className="flex gap-[9.200px]">
      <Card>
        <circle cx="11" cy="11" r="10" fill="#f01c1c" />
        <circle cx="24" cy="11" r="10" fill="#f9a21c" />
        <Word x={17.500} y={13.500} w={31} fontSize="7.500" fontWeight="700" fontStyle="italic" fill="#fff" className="font-['Roboto']">MasterCard</Word>
      </Card>
      <Card>
        <Word x={17.500} y={15} w={21} fontSize="11" fontWeight="800" fontStyle="italic" fill="#1f35c0" className="font-['Open_Sans']">VISA</Word>
      </Card>
      <Card>
        <text x="16.500" y="13.500" textLength="21" lengthAdjust="spacingAndGlyphs" fontSize="8" fontWeight="700" fontStyle="italic" className="font-['Open_Sans']">
          <tspan fill="#1c3f7c">Pay</tspan>
          <tspan fill="#1c8fd6">Pal</tspan>
        </text>
      </Card>
      <Card>
        <circle cx="14" cy="11" r="4" fill="#1a9bdb" />
        <circle cx="21" cy="11" r="4" fill="#e5303a" />
        <path d="M12 11H23" stroke="#fff" strokeWidth="1.300" />
      </Card>
      <Card>
        <path d="M11.900 8.500A3.500 3.500 0 0 0 6.200 8.800" stroke="#ea4335" strokeWidth="1.600" fill="none" />
        <path d="M6.200 8.800A3.500 3.500 0 0 0 6.200 12.300" stroke="#fbbc05" strokeWidth="1.600" fill="none" />
        <path d="M6.200 12.300A3.500 3.500 0 0 0 11.200 13.300" stroke="#34a853" strokeWidth="1.600" fill="none" />
        <path d="M11.200 13.300A3.500 3.500 0 0 0 12.300 10.700H9.300" stroke="#4285f4" strokeWidth="1.600" fill="none" />
        <Word x={22.500} y={14} w={14} fontSize="9" fill="#5f6368" className="font-['Roboto']">Pay</Word>
      </Card>
    </div>
  );
}

function PlaneIcon() {
  return (
    <svg width="28" height="30" viewBox="0 0 28 30" fill="none" stroke="#fff" strokeWidth="1.500" strokeLinejoin="round">
      <path d="M26.500 1L1 9L7 14.500L18 8L10.500 17L19 28Z" />
      <path d="M4 16.500L1.500 19M7 18L2 25M11 20.500L5.500 28M13.500 24.500L10.500 28" />
    </svg>
  );
}

function Column({ title, links }) {
  return (
    <div className="w-[412.500px]">
      <h4 className="h-[28px] text-[18.400px] font-medium leading-[28px]">{title}</h4>
      <ul className="mt-[22px] text-[10.400px] leading-[39.200px] tracking-[0.200px]">
        {links.map((l) => (
          <li key={l}>{l}</li>
        ))}
      </ul>
    </div>
  );
}

function Footer() {
  return (
    <footer className="mt-[55px] bg-[#232f3e] text-white">
      <div className="h-[106px] border-b border-t border-[#3a4655]">
        <div className="mx-auto flex w-[1622px] items-start">
          <div className="mt-[38px] w-[65px]"><PlaneIcon /></div>
          <h2 className="mt-[35px] w-[760px] text-[23px] font-medium leading-[32px]">Sign Up for Newsletter</h2>
          <div className="mt-[28px] flex h-[48px] w-[660px] text-[18.400px]">
            <div className="flex flex-1 items-center rounded-l-[6px] border border-[#ced4da] bg-white pb-px pl-[14px] text-[#6c757d]">Your Email Adress...</div>
            <div className="flex w-[153px] items-center justify-center rounded-r-[6px] border border-l-0 border-[#ced4da] pb-px">SUBSCRIBE</div>
          </div>
        </div>
      </div>
      <div className="mx-auto flex h-[419px] w-[1622px] pt-[25px]">
        <div className="w-[412.500px]">
          <h4 className="h-[28px] text-[18.400px] font-medium leading-[28px]">Contact Us</h4>
          <div className="mt-[21px] text-[10.400px] leading-[43.900px] tracking-[0.200px]">
            <div className="flex items-center text-[9.600px] tracking-[0.170px]">
              <HomeIcon size={10} />
              {"Kissariyat Wad Dahb N°8 , Bab Elahd , Rabat"}
            </div>
            <div>Tel: +212627883606</div>
            <div>Email: abderrahim_270@hotmail.com</div>
          </div>
          <div className="mt-[13px] flex items-center gap-[18px]">
            <FacebookIcon size={25} />
            <WhatsappSolid size={27} />
          </div>
        </div>
        <Column title="Account" links={["Login in My Account", "Favorite Wishlist", "Contact"]} />
        <Column
          title="Quick Links"
          links={["Cameras", "Smart Tv", "Smart Watches", "HeadPhones", "Smart Phone", "tablets", "Laptops", "Accessories"]}
        />
        <div>
          <h4 className="mb-[39px] h-[28px] text-[18.400px] font-medium leading-[28px]">Trademarks</h4>
          <Trademarks />
        </div>
      </div>
      <div className="h-[87px] border-t border-[#3a4655]">
        <div className="mx-auto flex w-[1622px] items-start">
          <div className="mt-[29px] w-[1268px] text-[14.400px] leading-[20px] tracking-[0.230px]">© 2024 Powered by Developer <span className="text-[13.800px]">Teljaoui Mohamed</span></div>
          <div className="mt-[32px]"><Payments /></div>
        </div>
      </div>
    </footer>
  );
}

export default function App() {
  return (
    <div className="h-[2027px] w-[1920px] overflow-hidden bg-[#f5f5f7] font-['Rubik','Roboto',sans-serif]">
      <Header />
      <div className="flex h-[84px] items-center justify-center bg-white pb-px text-[#212529]">
        <span className="text-[18.400px]">Home</span>
        <span className="ml-[10px] mt-[1px] text-[14.900px]">/ Contact Us</span>
      </div>
      <main className="mx-auto w-[1622px]">
        <MapSection />
        <ContactCard />
      </main>
      <Footer />
    </div>
  );
}
